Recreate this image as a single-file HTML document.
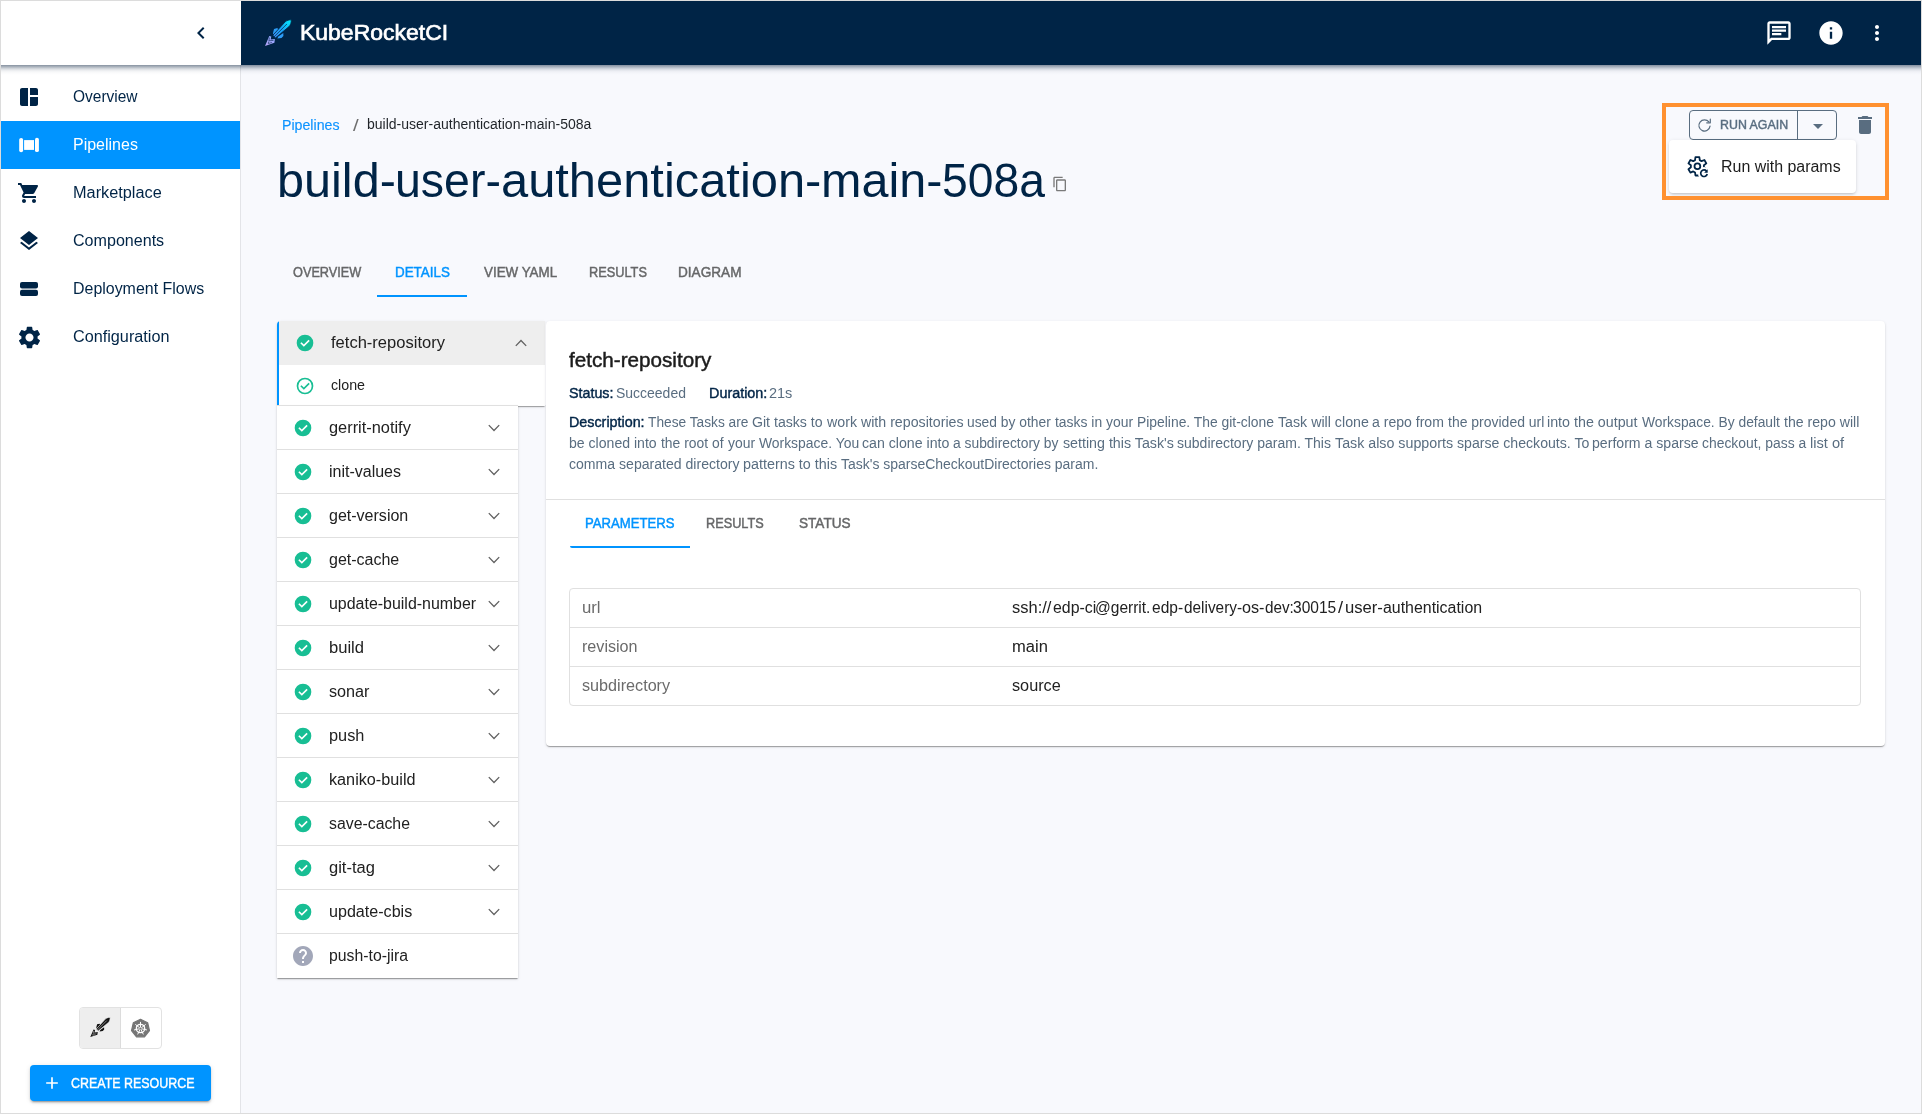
<!DOCTYPE html>
<html lang="en"><head><meta charset="utf-8"><title>KubeRocketCI - build-user-authentication-main-508a</title>
<style>
html,body{margin:0;padding:0;}
body{width:1922px;height:1114px;overflow:hidden;background:#f8f9fd;font-family:"Liberation Sans", sans-serif;}
#root{position:relative;width:1922px;height:1114px;overflow:hidden;}
.t{position:absolute;white-space:pre;line-height:1;transform-origin:0 0;}
.a{position:absolute;}
svg{position:absolute;overflow:visible;}
</style></head>
<body><div id="root">
<div class="a" style="left:1px;top:1px;width:240px;height:1112px;background:#fff;"></div>
<div class="a" style="left:240px;top:65px;width:1px;height:1048px;background:#e3e4e8;"></div>
<div class="a" style="left:1px;top:1px;width:1920px;height:64px;background:#002446;"></div>
<div class="a" style="left:1px;top:65px;width:1920px;height:10px;background:linear-gradient(to bottom,rgba(0,25,55,.48) 0,rgba(0,25,55,.31) 20%,rgba(0,25,55,.15) 40%,rgba(0,25,55,.05) 60%,rgba(0,25,55,.015) 80%,rgba(0,25,55,0) 100%);"></div>
<div class="a" style="left:1px;top:1px;width:240px;height:64px;background:#fff;"></div>
<svg style="left:188.8px;top:21.3px" width="24" height="24" viewBox="0 0 24 24"><path fill="#002446" d="M15.410 7.410L14 6l-6 6 6 6 1.410-1.410L10.830 12z"/></svg>
<svg style="left:258px;top:14px" width="40" height="38" viewBox="0 0 40 38"><defs><linearGradient id="lgb" gradientUnits="userSpaceOnUse" x1="15" y1="24" x2="33" y2="6"><stop offset="0" stop-color="#3f8cf7"/><stop offset=".5" stop-color="#18a6f7"/><stop offset="1" stop-color="#00f0ff"/></linearGradient><linearGradient id="lgf" gradientUnits="userSpaceOnUse" x1="7" y1="32" x2="16" y2="22"><stop offset="0" stop-color="#b9a4f6"/><stop offset="1" stop-color="#8aa6ff"/></linearGradient></defs><path fill="#2d9cf6" d="M16 15l3.300-.900 1 1.400-4.600 4.900-.800-.900zM25.300 18.900l.100 3.100-1.900 1.900-4.200.500 1-1.900z"/><path fill="url(#lgb)" stroke="#002446" stroke-width=".800" d="M33.300 5.900C31 5.700 29 6.500 27.300 7.700L14.900 21.200 17.400 24 31 12.600C32.500 11 33.400 8.500 33.300 5.900z"/><path fill="none" stroke="#002446" stroke-width=".700" d="M28.900 10L15.600 23.300"/><path fill="url(#lgf)" d="M11.300 22l2 .400-.600 3.100 4.200-.400-.500 3.600L7 31.900z"/><path fill="none" stroke="#002446" stroke-width=".600" d="M11.400 23.600l-.500 3.200 4.600-.400M10.600 27.600l-.300 1.900 3.600-1"/></svg>
<svg style="left:1765px;top:19px" width="28" height="28" viewBox="0 0 24 24"><path fill="#fff" d="M20 2H4c-1.100 0-1.990.900-1.990 2L2 22l4-4h14c1.100 0 2-.900 2-2V4c0-1.100-.900-2-2-2zm0 14H5.170L4 17.170V4h16v12zM6 12h8v2H6zm0-3h12v2H6zm0-3h12v2H6z"/></svg>
<svg style="left:1817px;top:19px" width="28" height="28" viewBox="0 0 24 24"><path fill="#fff" d="M12 2C6.480 2 2 6.480 2 12s4.480 10 10 10 10-4.480 10-10S17.520 2 12 2zm1 15h-2v-6h2v6zm0-8h-2V7h2v2z"/></svg>
<svg style="left:1865px;top:21px" width="24" height="24" viewBox="0 0 24 24"><path fill="#fff" d="M12 8c1.100 0 2-.900 2-2s-.900-2-2-2-2 .900-2 2 .900 2 2 2zm0 2c-1.100 0-2 .900-2 2s.900 2 2 2 2-.900 2-2-.900-2-2-2zm0 6c-1.100 0-2 .900-2 2s.900 2 2 2 2-.900 2-2-.900-2-2-2z"/></svg>
<div class="a" style="left:1px;top:121px;width:239px;height:48px;background:#0094ff;"></div>
<svg style="left:17px;top:85px" width="24" height="24" viewBox="0 0 24 24"><path fill="#002446" d="M11 21H5c-1.100 0-2-.900-2-2V5c0-1.100.900-2 2-2h6v18zm2 0h6c1.100 0 2-.900 2-2v-7h-8v9zm8-11V5c0-1.100-.900-2-2-2h-6v7h8z"/></svg>
<svg style="left:17px;top:133px" width="24" height="24" viewBox="0 0 24 24"><g fill="#fff"><rect x="2.200" y="4.900" width="3.900" height="14.300" rx="1.900"/><rect x="18" y="4.800" width="3.900" height="14.300" rx="1.900"/><rect x="7.100" y="7.100" width="9.900" height="9.800"/></g></svg>
<svg style="left:17px;top:181px" width="24" height="24" viewBox="0 0 24 24"><path fill="#002446" d="M7 18c-1.100 0-1.990.900-1.990 2S5.900 22 7 22s2-.900 2-2-.900-2-2-2zM1 2v2h2l3.600 7.590-1.350 2.450c-.160.280-.250.610-.250.960 0 1.100.900 2 2 2h12v-2H7.420c-.140 0-.250-.110-.250-.250l.030-.120.900-1.630h7.450c.750 0 1.410-.410 1.750-1.030l3.580-6.490c.080-.140.120-.310.120-.480 0-.550-.450-1-1-1H5.210l-.940-2H1zm16 16c-1.100 0-1.990.900-1.990 2s.890 2 1.990 2 2-.900 2-2-.900-2-2-2z"/></svg>
<svg style="left:17px;top:229px" width="24" height="24" viewBox="0 0 24 24"><path fill="#002446" d="M11.990 18.540l-7.370-5.730L3 14.070l9 7 9-7-1.630-1.270-7.380 5.740zM12 16l7.360-5.730L21 9l-9-7-9 7 1.630 1.270L12 16z"/></svg>
<svg style="left:17px;top:277px" width="24" height="24" viewBox="0 0 24 24"><g fill="#002446"><rect x="3" y="5" width="18" height="6.400" rx="2"/><rect x="3" y="12.700" width="18" height="6.300" rx="2"/></g></svg>
<svg style="left:15.5px;top:323.5px" width="27" height="27" viewBox="0 0 24 24"><path fill="#002446" d="M19.140 12.940c.040-.300.060-.610.060-.940 0-.320-.020-.640-.070-.940l2.030-1.580c.180-.140.230-.410.120-.610l-1.920-3.320c-.120-.220-.370-.290-.590-.220l-2.390.960c-.500-.380-1.030-.700-1.620-.940l-.360-2.540c-.040-.240-.240-.410-.480-.410h-3.840c-.240 0-.430.170-.470.410l-.360 2.540c-.590.240-1.130.570-1.620.940l-2.390-.960c-.220-.080-.470 0-.590.220L2.740 8.870c-.120.210-.080.470.120.610l2.030 1.580c-.050.300-.090.630-.090.940s.020.640.070.940l-2.030 1.580c-.180.140-.230.410-.120.610l1.920 3.320c.120.220.370.290.590.220l2.390-.960c.500.380 1.030.700 1.620.940l.360 2.540c.050.240.240.410.480.410h3.840c.240 0 .440-.170.470-.410l.360-2.540c.590-.240 1.130-.560 1.620-.940l2.390.960c.220.080.470 0 .590-.220l1.920-3.320c.120-.220.070-.470-.120-.610l-2.010-1.580zM12 15.600c-1.980 0-3.600-1.620-3.600-3.600s1.620-3.600 3.600-3.600 3.600 1.620 3.600 3.600-1.620 3.600-3.600 3.600z"/></svg>
<div class="a" style="left:79px;top:1007px;width:83px;height:42px;box-sizing:border-box;border:1px solid #e2e2e2;border-radius:4px;background:#fff;"></div>
<div class="a" style="left:80px;top:1008px;width:40px;height:40px;background:#eeeeee;border-radius:3px 0 0 3px;"></div>
<div class="a" style="left:120px;top:1008px;width:1px;height:40px;background:#dcdcdc;"></div>
<svg style="left:85px;top:1013.450px" width="30.200" height="28.690" viewBox="0 0 40 38"><path fill="#111" d="M16 15l3.300-.900 1 1.400-4.600 4.900-.800-.900zM25.300 18.900l.100 3.100-1.900 1.900-4.200.500 1-1.900z"/><path fill="#111" stroke="#eeeeee" stroke-width=".800" d="M33.300 5.900C31 5.700 29 6.500 27.300 7.700L14.900 21.200 17.400 24 31 12.600C32.500 11 33.400 8.500 33.300 5.900z"/><path fill="none" stroke="#eeeeee" stroke-width=".700" d="M28.900 10L15.600 23.300"/><path fill="#111" d="M11.300 22l2 .400-.600 3.100 4.200-.400-.500 3.600L7 31.900z"/><path fill="none" stroke="#eeeeee" stroke-width=".600" d="M11.400 23.600l-.500 3.200 4.600-.400M10.600 27.600l-.300 1.900 3.600-1"/></svg>
<svg style="left:0;top:0" width="1922" height="1114" viewBox="0 0 1922 1114"><polygon points="140.50,1019.30 147.69,1022.76 149.47,1030.55 144.49,1036.79 136.51,1036.79 131.53,1030.55 133.31,1022.76" fill="#757575" stroke="#757575" stroke-width="1.200" stroke-linejoin="round"/><circle cx="140.5" cy="1028.5" r="4.200" fill="none" stroke="#fff" stroke-width="1.300"/><path d="M140.50 1028.50L140.50 1021.90M140.50 1028.50L145.66 1024.38M140.50 1028.50L146.93 1029.97M140.50 1028.50L143.36 1034.45M140.50 1028.50L137.64 1034.45M140.50 1028.50L134.07 1029.97M140.50 1028.50L135.34 1024.38" stroke="#fff" stroke-width="1" fill="none"/><circle cx="140.5" cy="1028.5" r="1.100" fill="#757575"/></svg>
<div class="a" style="left:30px;top:1065px;width:181px;height:36px;background:#0094ff;border-radius:4px;box-shadow:0 3px 1px -2px rgba(0,0,0,.2),0 2px 2px 0 rgba(0,0,0,.14),0 1px 5px 0 rgba(0,0,0,.12);"></div>
<svg style="left:42px;top:1073px" width="20" height="20" viewBox="0 0 24 24"><path fill="#fff" d="M19 13h-6v6h-2v-6H5v-2h6V5h2v6h6v2z"/></svg>
<svg style="left:1052px;top:176px" width="16" height="16" viewBox="0 0 24 24"><path fill="#7a7a7a" d="M16 1H4c-1.100 0-2 .900-2 2v14h2V3h12V1zm3 4H8c-1.100 0-2 .900-2 2v14c0 1.100.900 2 2 2h11c1.100 0 2-.900 2-2V7c0-1.100-.900-2-2-2zm0 16H8V7h11v14z"/></svg>
<div class="a" style="left:377px;top:295px;width:90px;height:2px;background:#0094ff;"></div>
<div class="a" style="left:277px;top:321px;width:268px;height:85px;background:#fff;border-radius:4px 0 0 0;box-shadow:0 2px 1px -1px rgba(0,0,0,.2),0 1px 1px 0 rgba(0,0,0,.14),0 1px 3px 0 rgba(0,0,0,.12);overflow:hidden;"><div class="a" style="left:0;top:0;width:268px;height:44px;background:#eeeeee;"></div><div class="a" style="left:0;top:0;width:2px;height:85px;background:#0094ff;"></div></div>
<div class="a" style="left:277px;top:406px;width:241px;height:572px;background:#fff;box-shadow:0 2px 1px -1px rgba(0,0,0,.2),0 1px 1px 0 rgba(0,0,0,.14),0 1px 3px 0 rgba(0,0,0,.12);"></div>
<div class="a" style="left:277px;top:405px;width:241px;height:1px;background:#e0e0e0;"></div>
<svg style="left:295px;top:333px" width="20" height="20" viewBox="0 0 24 24"><circle cx="12" cy="12" r="10" fill="#18be94"/><path fill="#fff" d="M10.600 16.600l7.050-7.050-1.400-1.400-5.650 5.650-2.850-2.850-1.400 1.400z"/></svg>
<svg style="left:295px;top:376px" width="20" height="20" viewBox="0 0 24 24"><circle cx="12" cy="12" r="9" fill="none" stroke="#18be94" stroke-width="2"/><path fill="#18be94" d="M10.600 16.600l7.050-7.050-1.400-1.400-5.650 5.650-2.850-2.850-1.400 1.400z"/></svg>
<svg style="left:515px;top:339px" width="12" height="8" viewBox="0 0 12 8"><path fill="none" stroke="#616161" stroke-width="1.300" d="M.800 6.900L6 1.500l5.200 5.400"/></svg>
<svg style="left:293px;top:418px" width="20" height="20" viewBox="0 0 24 24"><circle cx="12" cy="12" r="10" fill="#18be94"/><path fill="#fff" d="M10.600 16.600l7.050-7.050-1.400-1.400-5.650 5.650-2.850-2.850-1.400 1.400z"/></svg>
<svg style="left:488px;top:424px" width="12" height="8" viewBox="0 0 12 8"><path fill="none" stroke="#616161" stroke-width="1.300" d="M.800 1.100L6 6.500l5.200-5.400"/></svg>
<div class="a" style="left:277px;top:449px;width:241px;height:1px;background:#e0e0e0;"></div>
<svg style="left:293px;top:462px" width="20" height="20" viewBox="0 0 24 24"><circle cx="12" cy="12" r="10" fill="#18be94"/><path fill="#fff" d="M10.600 16.600l7.050-7.050-1.400-1.400-5.650 5.650-2.850-2.850-1.400 1.400z"/></svg>
<svg style="left:488px;top:468px" width="12" height="8" viewBox="0 0 12 8"><path fill="none" stroke="#616161" stroke-width="1.300" d="M.800 1.100L6 6.500l5.200-5.400"/></svg>
<div class="a" style="left:277px;top:493px;width:241px;height:1px;background:#e0e0e0;"></div>
<svg style="left:293px;top:506px" width="20" height="20" viewBox="0 0 24 24"><circle cx="12" cy="12" r="10" fill="#18be94"/><path fill="#fff" d="M10.600 16.600l7.050-7.050-1.400-1.400-5.650 5.650-2.850-2.850-1.400 1.400z"/></svg>
<svg style="left:488px;top:512px" width="12" height="8" viewBox="0 0 12 8"><path fill="none" stroke="#616161" stroke-width="1.300" d="M.800 1.100L6 6.500l5.200-5.400"/></svg>
<div class="a" style="left:277px;top:537px;width:241px;height:1px;background:#e0e0e0;"></div>
<svg style="left:293px;top:550px" width="20" height="20" viewBox="0 0 24 24"><circle cx="12" cy="12" r="10" fill="#18be94"/><path fill="#fff" d="M10.600 16.600l7.050-7.050-1.400-1.400-5.650 5.650-2.850-2.850-1.400 1.400z"/></svg>
<svg style="left:488px;top:556px" width="12" height="8" viewBox="0 0 12 8"><path fill="none" stroke="#616161" stroke-width="1.300" d="M.800 1.100L6 6.500l5.200-5.400"/></svg>
<div class="a" style="left:277px;top:581px;width:241px;height:1px;background:#e0e0e0;"></div>
<svg style="left:293px;top:594px" width="20" height="20" viewBox="0 0 24 24"><circle cx="12" cy="12" r="10" fill="#18be94"/><path fill="#fff" d="M10.600 16.600l7.050-7.050-1.400-1.400-5.650 5.650-2.850-2.850-1.400 1.400z"/></svg>
<svg style="left:488px;top:600px" width="12" height="8" viewBox="0 0 12 8"><path fill="none" stroke="#616161" stroke-width="1.300" d="M.800 1.100L6 6.500l5.200-5.400"/></svg>
<div class="a" style="left:277px;top:625px;width:241px;height:1px;background:#e0e0e0;"></div>
<svg style="left:293px;top:638px" width="20" height="20" viewBox="0 0 24 24"><circle cx="12" cy="12" r="10" fill="#18be94"/><path fill="#fff" d="M10.600 16.600l7.050-7.050-1.400-1.400-5.650 5.650-2.850-2.850-1.400 1.400z"/></svg>
<svg style="left:488px;top:644px" width="12" height="8" viewBox="0 0 12 8"><path fill="none" stroke="#616161" stroke-width="1.300" d="M.800 1.100L6 6.500l5.200-5.400"/></svg>
<div class="a" style="left:277px;top:669px;width:241px;height:1px;background:#e0e0e0;"></div>
<svg style="left:293px;top:682px" width="20" height="20" viewBox="0 0 24 24"><circle cx="12" cy="12" r="10" fill="#18be94"/><path fill="#fff" d="M10.600 16.600l7.050-7.050-1.400-1.400-5.650 5.650-2.850-2.850-1.400 1.400z"/></svg>
<svg style="left:488px;top:688px" width="12" height="8" viewBox="0 0 12 8"><path fill="none" stroke="#616161" stroke-width="1.300" d="M.800 1.100L6 6.500l5.200-5.400"/></svg>
<div class="a" style="left:277px;top:713px;width:241px;height:1px;background:#e0e0e0;"></div>
<svg style="left:293px;top:726px" width="20" height="20" viewBox="0 0 24 24"><circle cx="12" cy="12" r="10" fill="#18be94"/><path fill="#fff" d="M10.600 16.600l7.050-7.050-1.400-1.400-5.650 5.650-2.850-2.850-1.400 1.400z"/></svg>
<svg style="left:488px;top:732px" width="12" height="8" viewBox="0 0 12 8"><path fill="none" stroke="#616161" stroke-width="1.300" d="M.800 1.100L6 6.500l5.200-5.400"/></svg>
<div class="a" style="left:277px;top:757px;width:241px;height:1px;background:#e0e0e0;"></div>
<svg style="left:293px;top:770px" width="20" height="20" viewBox="0 0 24 24"><circle cx="12" cy="12" r="10" fill="#18be94"/><path fill="#fff" d="M10.600 16.600l7.050-7.050-1.400-1.400-5.650 5.650-2.850-2.850-1.400 1.400z"/></svg>
<svg style="left:488px;top:776px" width="12" height="8" viewBox="0 0 12 8"><path fill="none" stroke="#616161" stroke-width="1.300" d="M.800 1.100L6 6.500l5.200-5.400"/></svg>
<div class="a" style="left:277px;top:801px;width:241px;height:1px;background:#e0e0e0;"></div>
<svg style="left:293px;top:814px" width="20" height="20" viewBox="0 0 24 24"><circle cx="12" cy="12" r="10" fill="#18be94"/><path fill="#fff" d="M10.600 16.600l7.050-7.050-1.400-1.400-5.650 5.650-2.850-2.850-1.400 1.400z"/></svg>
<svg style="left:488px;top:820px" width="12" height="8" viewBox="0 0 12 8"><path fill="none" stroke="#616161" stroke-width="1.300" d="M.800 1.100L6 6.500l5.200-5.400"/></svg>
<div class="a" style="left:277px;top:845px;width:241px;height:1px;background:#e0e0e0;"></div>
<svg style="left:293px;top:858px" width="20" height="20" viewBox="0 0 24 24"><circle cx="12" cy="12" r="10" fill="#18be94"/><path fill="#fff" d="M10.600 16.600l7.050-7.050-1.400-1.400-5.650 5.650-2.850-2.850-1.400 1.400z"/></svg>
<svg style="left:488px;top:864px" width="12" height="8" viewBox="0 0 12 8"><path fill="none" stroke="#616161" stroke-width="1.300" d="M.800 1.100L6 6.500l5.200-5.400"/></svg>
<div class="a" style="left:277px;top:889px;width:241px;height:1px;background:#e0e0e0;"></div>
<svg style="left:293px;top:902px" width="20" height="20" viewBox="0 0 24 24"><circle cx="12" cy="12" r="10" fill="#18be94"/><path fill="#fff" d="M10.600 16.600l7.050-7.050-1.400-1.400-5.650 5.650-2.850-2.850-1.400 1.400z"/></svg>
<svg style="left:488px;top:908px" width="12" height="8" viewBox="0 0 12 8"><path fill="none" stroke="#616161" stroke-width="1.300" d="M.800 1.100L6 6.500l5.200-5.400"/></svg>
<div class="a" style="left:277px;top:933px;width:241px;height:1px;background:#e0e0e0;"></div>
<svg style="left:291px;top:944px" width="24" height="24" viewBox="0 0 24 24"><circle cx="12" cy="12" r="8" fill="#fff"/><path fill="#a2a7b9" d="M12 2C6.480 2 2 6.480 2 12s4.480 10 10 10 10-4.480 10-10S17.520 2 12 2zm1 17h-2v-2h2v2zm2.070-7.750l-.9.920C13.450 12.900 13 13.500 13 15h-2v-.500c0-1.100.450-2.100 1.170-2.830l1.240-1.260c.370-.360.590-.860.590-1.410 0-1.100-.900-2-2-2s-2 .900-2 2H8c0-2.210 1.790-4 4-4s4 1.790 4 4c0 .880-.360 1.680-.930 2.250z"/></svg>
<div class="a" style="left:546px;top:321px;width:1339px;height:425px;background:#fff;border-radius:4px;box-shadow:0 2px 1px -1px rgba(0,0,0,.2),0 1px 1px 0 rgba(0,0,0,.14),0 1px 3px 0 rgba(0,0,0,.12);"></div>
<div class="a" style="left:546px;top:499px;width:1339px;height:1px;background:#e0e0e0;"></div>
<div class="a" style="left:545px;top:322px;width:1px;height:83px;background:#f1f1f4;"></div>
<div class="a" style="left:570px;top:546px;width:120px;height:2px;background:#0094ff;border-radius:0 0 0 3px;"></div>
<div class="a" style="left:569px;top:588px;width:1292px;height:118px;box-sizing:border-box;border:1px solid #e0e0e0;border-radius:4px;"></div>
<div class="a" style="left:570px;top:627px;width:1290px;height:1px;background:#e0e0e0;"></div>
<div class="a" style="left:570px;top:666px;width:1290px;height:1px;background:#e0e0e0;"></div>
<div class="a" style="left:1689px;top:110px;width:148px;height:30px;box-sizing:border-box;border:1px solid #596d80;border-radius:4px;"></div>
<div class="a" style="left:1797px;top:110px;width:1px;height:30px;background:#596d80;"></div>
<svg style="left:0;top:0" width="1922" height="1114" viewBox="0 0 1922 1114"><g fill="none" stroke="#596d80" stroke-width="1.200" stroke-linecap="round" stroke-linejoin="round"><path d="M1708.91 121.95A5.6 5.6 0 1 0 1710.05 126.18"/><path d="M1710.300 119.200v3.600h-3.600"/></g></svg>
<svg style="left:1805.5px;top:114px" width="24" height="24" viewBox="0 0 24 24"><path fill="#596d80" d="M7 10l5 5 5-5z"/></svg>
<svg style="left:1853px;top:113px" width="24" height="24" viewBox="0 0 24 24"><path fill="#596d80" d="M6 19c0 1.100.900 2 2 2h8c1.100 0 2-.900 2-2V7H6v12zM19 4h-3.500l-1-1h-5l-1 1H5v2h14V4z"/></svg>
<div class="a" style="left:1669px;top:140px;width:187px;height:53px;background:#fff;border-radius:4px;box-shadow:0 2px 3px -1px rgba(0,0,0,.18),0 1px 4px 0 rgba(0,0,0,.10);"></div>
<svg style="left:0;top:0" width="1922" height="1114" viewBox="0 0 1922 1114"><defs><mask id="gm" maskUnits="userSpaceOnUse" x="1680" y="150" width="40" height="40"><rect x="1680" y="150" width="40" height="40" fill="#fff"/><circle cx="1704.0" cy="173.2" r="6.100" fill="#000"/></mask></defs><g fill="none" stroke="#002446" stroke-linejoin="round"><g mask="url(#gm)"><path stroke-width="1.800" d="M1699.77 160.14L1699.35 157.11L1695.45 157.11L1695.03 160.14L1693.25 161.17L1690.41 160.01L1688.46 163.40L1690.88 165.27L1690.88 167.33L1688.46 169.20L1690.41 172.59L1693.25 171.43L1695.03 172.46L1695.45 175.49L1699.35 175.49L1699.77 172.46L1701.55 171.43L1704.39 172.59L1706.34 169.20L1703.92 167.33L1703.92 165.27L1706.34 163.40L1704.39 160.01L1701.55 161.17Z"/></g><circle cx="1697.4" cy="166.3" r="2.900" stroke-width="1.800"/><path stroke-width="1.700" stroke-linecap="butt" d="M1706.53 171.08A3.3 3.3 0 1 0 1707.19 174.05"/></g><path fill="#002446" d="M1707.700 169.300v3.500h-3.500z"/></svg>
<div class="a" style="left:1662px;top:103px;width:227px;height:97px;box-sizing:border-box;border:4px solid #ff9130;"></div>
<div class="a" style="left:0px;top:0px;width:1922px;height:1114px;box-sizing:border-box;border:1px solid #dcdcdc;pointer-events:none;"></div>
<span class="t" style="left:73.00px;top:89px;font-size:16px;color:#002446;transform:scaleX(0.9676);">Overview</span>
<span class="t" style="left:73.00px;top:137px;font-size:16px;color:#ffffff;transform:scaleX(0.9995);">Pipelines</span>
<span class="t" style="left:73.00px;top:185px;font-size:16px;color:#002446;transform:scaleX(1.0181);">Marketplace</span>
<span class="t" style="left:73.00px;top:233px;font-size:16px;color:#002446;transform:scaleX(1.0046);">Components</span>
<span class="t" style="left:73.00px;top:281px;font-size:16px;color:#002446;transform:scaleX(0.9963);">Deployment Flows</span>
<span class="t" style="left:73.00px;top:329px;font-size:16px;color:#002446;transform:scaleX(1.0134);">Configuration</span>
<span class="t" style="left:71.07px;top:1076px;font-size:14px;color:#ffffff;-webkit-text-stroke:0.4px #ffffff;transform:scaleX(0.8889);">CREATE RESOURCE</span>
<span class="t" style="left:299.95px;top:23px;font-size:21.5px;color:#ffffff;-webkit-text-stroke:0.65px #ffffff;transform:scaleX(1.0684);">KubeRocketCI</span>
<span class="t" style="left:282.00px;top:118px;font-size:14px;color:#0d93ff;-webkit-text-stroke:0.15px #0d93ff;transform:scaleX(1.0123);">Pipelines</span>
<span class="t" style="left:352.82px;top:118px;font-size:16px;color:#6e6e6e;transform:scaleX(1.2750);">/</span>
<span class="t" style="left:367.00px;top:117px;font-size:14px;color:#1f2328;transform:scaleX(1.0008);">build-user-authentication-main-508a</span>
<div><span class="t" style="left:277.00px;top:157px;font-size:48px;color:#002446;transform:scaleX(1.0122);">build-</span><span class="t" style="left:395.30px;top:157px;font-size:48px;color:#002446;transform:scaleX(0.9688);">user-</span><span class="t" style="left:501.13px;top:157px;font-size:48px;color:#002446;transform:scaleX(1.0172);">authentication-</span><span class="t" style="left:820.61px;top:157px;font-size:48px;color:#002446;transform:scaleX(1.0111);">main-</span><span class="t" style="left:942.04px;top:157px;font-size:48px;color:#002446;transform:scaleX(0.9637);">508a</span></div>
<span class="t" style="left:293.10px;top:265px;font-size:14px;color:#666768;-webkit-text-stroke:0.45px #666768;transform:scaleX(0.9090);">OVERVIEW</span>
<span class="t" style="left:394.56px;top:265px;font-size:14px;color:#0094ff;-webkit-text-stroke:0.45px #0094ff;transform:scaleX(0.9570);">DETAILS</span>
<span class="t" style="left:483.66px;top:265px;font-size:14px;color:#666768;-webkit-text-stroke:0.45px #666768;transform:scaleX(0.9556);">VIEW YAML</span>
<span class="t" style="left:588.85px;top:265px;font-size:14px;color:#666768;-webkit-text-stroke:0.45px #666768;transform:scaleX(0.9113);">RESULTS</span>
<span class="t" style="left:678.40px;top:265px;font-size:14px;color:#666768;-webkit-text-stroke:0.45px #666768;transform:scaleX(0.9716);">DIAGRAM</span>
<span class="t" style="left:331.00px;top:335px;font-size:16px;color:#212121;transform:scaleX(1.0336);">fetch-repository</span>
<span class="t" style="left:331.00px;top:378px;font-size:14px;color:#212121;transform:scaleX(1.0172);">clone</span>
<span class="t" style="left:329.00px;top:420px;font-size:16px;color:#212121;transform:scaleX(1.0223);">gerrit-notify</span>
<span class="t" style="left:329.00px;top:464px;font-size:16px;color:#212121;transform:scaleX(0.9996);">init-values</span>
<span class="t" style="left:329.00px;top:508px;font-size:16px;color:#212121;transform:scaleX(1.0015);">get-version</span>
<span class="t" style="left:329.00px;top:552px;font-size:16px;color:#212121;transform:scaleX(0.9996);">get-cache</span>
<span class="t" style="left:329.00px;top:596px;font-size:16px;color:#212121;transform:scaleX(0.9965);">update-build-number</span>
<span class="t" style="left:329.00px;top:640px;font-size:16px;color:#212121;transform:scaleX(1.0360);">build</span>
<span class="t" style="left:329.00px;top:684px;font-size:16px;color:#212121;transform:scaleX(1.0117);">sonar</span>
<span class="t" style="left:329.00px;top:728px;font-size:16px;color:#212121;transform:scaleX(1.0190);">push</span>
<span class="t" style="left:329.00px;top:772px;font-size:16px;color:#212121;transform:scaleX(1.0131);">kaniko-build</span>
<span class="t" style="left:329.00px;top:816px;font-size:16px;color:#212121;transform:scaleX(0.9894);">save-cache</span>
<span class="t" style="left:329.00px;top:860px;font-size:16px;color:#212121;transform:scaleX(1.0312);">git-tag</span>
<span class="t" style="left:329.00px;top:904px;font-size:16px;color:#212121;transform:scaleX(1.0061);">update-cbis</span>
<span class="t" style="left:329.00px;top:948px;font-size:16px;color:#212121;transform:scaleX(0.9873);">push-to-jira</span>
<span class="t" style="left:1719.83px;top:118px;font-size:13px;color:#596d80;-webkit-text-stroke:0.45px #596d80;transform:scaleX(0.9521);">RUN AGAIN</span>
<span class="t" style="left:1721.01px;top:159px;font-size:16px;color:#1c1c1c;transform:scaleX(0.9963);">Run with params</span>
<span class="t" style="left:569.00px;top:350px;font-size:20px;color:#1c1c1c;-webkit-text-stroke:0.45px #1c1c1c;transform:scaleX(1.0332);">fetch-repository</span>
<div><span class="t" style="left:569.00px;top:386px;font-size:14px;color:#002446;-webkit-text-stroke:0.4px #002446;transform:scaleX(1.0191);">Status:</span> <span class="t" style="left:616.08px;top:386px;font-size:14px;color:#596d80;transform:scaleX(0.9981);">Succeeded</span></div>
<div><span class="t" style="left:708.76px;top:386px;font-size:14px;color:#002446;-webkit-text-stroke:0.4px #002446;transform:scaleX(1.0270);">Duration:</span> <span class="t" style="left:769.22px;top:386px;font-size:14px;color:#596d80;transform:scaleX(1.0348);">21s</span></div>
<div><span class="t" style="left:569.00px;top:415px;font-size:14px;color:#002446;-webkit-text-stroke:0.4px #002446;transform:scaleX(1.0225);">Description:</span> <span class="t" style="left:648.02px;top:415px;font-size:14px;color:#596d80;transform:scaleX(0.9801);">These Tasks are</span> <span class="t" style="left:752.18px;top:415px;font-size:14px;color:#596d80;transform:scaleX(1.0084);">Git tasks to</span> <span class="t" style="left:826.66px;top:415px;font-size:14px;color:#596d80;transform:scaleX(1.0144);">work with repositories</span> <span class="t" style="left:966.72px;top:415px;font-size:14px;color:#596d80;transform:scaleX(0.9872);">used by other</span> <span class="t" style="left:1055.12px;top:415px;font-size:14px;color:#596d80;transform:scaleX(0.9937);">tasks in your</span> <span class="t" style="left:1136.86px;top:415px;font-size:14px;color:#596d80;transform:scaleX(0.9909);">Pipeline. The git-clone</span> <span class="t" style="left:1277.84px;top:415px;font-size:14px;color:#596d80;transform:scaleX(1.0154);">Task will clone</span> <span class="t" style="left:1371.77px;top:415px;font-size:14px;color:#596d80;transform:scaleX(1.0040);">a repo from</span> <span class="t" style="left:1447.87px;top:415px;font-size:14px;color:#596d80;transform:scaleX(0.9985);">the provided url</span> <span class="t" style="left:1546.79px;top:415px;font-size:14px;color:#596d80;transform:scaleX(1.0198);">into the output</span> <span class="t" style="left:1641.62px;top:415px;font-size:14px;color:#596d80;transform:scaleX(0.9867);">Workspace. By default</span> <span class="t" style="left:1784.37px;top:415px;font-size:14px;color:#596d80;transform:scaleX(1.0085);">the repo will</span> <span class="t" style="left:569.00px;top:436px;font-size:14px;color:#596d80;transform:scaleX(1.0054);">be cloned into</span> <span class="t" style="left:660.61px;top:436px;font-size:14px;color:#596d80;transform:scaleX(0.9916);">the root of</span> <span class="t" style="left:728.13px;top:436px;font-size:14px;color:#596d80;transform:scaleX(0.9934);">your Workspace. You</span> <span class="t" style="left:862.18px;top:436px;font-size:14px;color:#596d80;transform:scaleX(1.0113);">can clone into</span> <span class="t" style="left:953.45px;top:436px;font-size:14px;color:#596d80;transform:scaleX(0.9885);">a subdirectory by</span> <span class="t" style="left:1062.83px;top:436px;font-size:14px;color:#596d80;transform:scaleX(1.0172);">setting this Task&#x27;s</span> <span class="t" style="left:1177.29px;top:436px;font-size:14px;color:#596d80;transform:scaleX(1.0008);">subdirectory param. This</span> <span class="t" style="left:1335.38px;top:436px;font-size:14px;color:#596d80;transform:scaleX(1.0181);">Task also supports</span> <span class="t" style="left:1457.06px;top:436px;font-size:14px;color:#596d80;transform:scaleX(1.0083);">sparse checkouts. To</span> <span class="t" style="left:1592.32px;top:436px;font-size:14px;color:#596d80;transform:scaleX(1.0075);">perform a sparse</span> <span class="t" style="left:1702.22px;top:436px;font-size:14px;color:#596d80;transform:scaleX(0.9915);">checkout, pass a</span> <span class="t" style="left:1810.25px;top:436px;font-size:14px;color:#596d80;transform:scaleX(1.0434);">list of</span> <span class="t" style="left:569.00px;top:457px;font-size:14px;color:#596d80;transform:scaleX(1.0052);">comma separated directory</span> <span class="t" style="left:743.30px;top:457px;font-size:14px;color:#596d80;transform:scaleX(1.0244);">patterns to this</span> <span class="t" style="left:841.46px;top:457px;font-size:14px;color:#596d80;transform:scaleX(0.9978);">Task&#x27;s sparseCheckoutDirectories param.</span></div>
<span class="t" style="left:584.91px;top:516px;font-size:14px;color:#0094ff;-webkit-text-stroke:0.45px #0094ff;transform:scaleX(0.9371);">PARAMETERS</span>
<span class="t" style="left:706.11px;top:516px;font-size:14px;color:#666768;-webkit-text-stroke:0.45px #666768;transform:scaleX(0.9076);">RESULTS</span>
<span class="t" style="left:799.05px;top:516px;font-size:14px;color:#666768;-webkit-text-stroke:0.45px #666768;transform:scaleX(0.9700);">STATUS</span>
<span class="t" style="left:582.00px;top:600px;font-size:16px;color:#6b6b6b;transform:scaleX(1.0455);">url</span>
<span class="t" style="left:582.00px;top:639px;font-size:16px;color:#6b6b6b;transform:scaleX(1.0074);">revision</span>
<span class="t" style="left:582.00px;top:678px;font-size:16px;color:#6b6b6b;transform:scaleX(1.0109);">subdirectory</span>
<div><span class="t" style="left:1012.00px;top:600px;font-size:16px;color:#212121;transform:scaleX(1.0295);">ssh://</span><span class="t" style="left:1052.57px;top:600px;font-size:16px;color:#212121;transform:scaleX(0.9921);">edp-ci</span><span class="t" style="left:1095.38px;top:600px;font-size:16px;color:#212121;transform:scaleX(0.9699);">@gerrit.</span><span class="t" style="left:1151.89px;top:600px;font-size:16px;color:#212121;transform:scaleX(0.9700);">edp-</span><span class="t" style="left:1183.78px;top:600px;font-size:16px;color:#212121;transform:scaleX(0.9603);">delivery-</span><span class="t" style="left:1242.12px;top:600px;font-size:16px;color:#212121;transform:scaleX(1.0113);">os-</span><span class="t" style="left:1264.64px;top:600px;font-size:16px;color:#212121;transform:scaleX(0.9542);">dev:</span><span class="t" style="left:1293.25px;top:600px;font-size:16px;color:#212121;transform:scaleX(0.9709);">30015</span><span class="t" style="left:1338.33px;top:600px;font-size:16px;color:#212121;transform:scaleX(1.1321);">/</span><span class="t" style="left:1344.62px;top:600px;font-size:16px;color:#212121;transform:scaleX(1.0394);">user-</span><span class="t" style="left:1382.53px;top:600px;font-size:16px;color:#212121;transform:scaleX(0.9945);">authentication</span></div>
<span class="t" style="left:1012.00px;top:639px;font-size:16px;color:#212121;transform:scaleX(1.0333);">main</span>
<span class="t" style="left:1012.00px;top:678px;font-size:16px;color:#212121;transform:scaleX(1.0153);">source</span>
</div></body></html>
